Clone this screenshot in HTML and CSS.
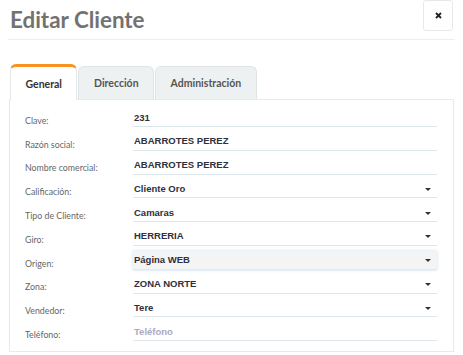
FILE: index.html
```html
<!DOCTYPE html>
<html lang="es">
<head>
  <meta charset="UTF-8" />
  <meta name="viewport" content="width=device-width, initial-scale=1.0"/>
  <title>Editar Cliente</title>
  <link rel="stylesheet" href="styles.css">
</head>
<body>
  <div class="modal">
    <div class="modal-header">
      <h1 class="title">Editar Cliente</h1>
      <button class="close" type="button">
        <svg width="7" height="7" viewBox="0 0 7 7"><path d="M1 1L6 6M6 1L1 6" stroke="#222" stroke-width="1.8"/></svg>
      </button>
    </div>

    <div class="tabs">
      <div class="tab active">General</div>
      <div class="tab">Dirección</div>
      <div class="tab">Administración</div>
    </div>

    <div class="panel">
      <div class="form">
        <label>Clave:</label>
        <div class="field"><span>231</span></div>

        <label>Razón social:</label>
        <div class="field"><span>ABARROTES PEREZ</span></div>

        <label>Nombre comercial:</label>
        <div class="field"><span>ABARROTES PEREZ</span></div>

        <label>Calificación:</label>
        <div class="field"><span>Cliente Oro</span><i class="caret"></i></div>

        <label>Tipo de Cliente:</label>
        <div class="field"><span>Camaras</span><i class="caret"></i></div>

        <label>Giro:</label>
        <div class="field"><span>HERRERIA</span><i class="caret"></i></div>

        <label>Origen:</label>
        <div class="field focus"><span>Página WEB</span><i class="caret"></i></div>

        <label>Zona:</label>
        <div class="field"><span>ZONA NORTE</span><i class="caret"></i></div>

        <label>Vendedor:</label>
        <div class="field"><span>Tere</span><i class="caret"></i></div>

        <label>Teléfono:</label>
        <div class="field"><span class="placeholder">Teléfono</span></div>
      </div>
    </div>
  </div>
</body>
</html>
```

FILE: styles.css
```css
body {
  margin: 0;
  background: #fff;
  font-family: Lato, "Open Sans", sans-serif;
}

.modal {
  padding: 0 8px;
}

.modal-header {
  display: flex;
  justify-content: space-between;
  align-items: flex-start;
  height: 39px;
  border-bottom: 1px solid #eeeeee;
}

.title {
  margin: 7px 0 0 2px;
  font-size: 22.4px;
  line-height: 26px;
  font-weight: 700;
  color: #727272;
}

.close {
  width: 30px;
  height: 31px;
  margin-right: 2px;
  padding: 0;
  display: flex;
  justify-content: center;
  align-items: center;
  background: #fff;
  border: 1px solid #e8e8e8;
  border-radius: 3px;
}

.tabs {
  display: flex;
  align-items: flex-end;
  gap: 1px;
  margin: 24px 0 0 2px;
  position: relative;
  z-index: 1;
}

.tab {
  height: 33px;
  box-sizing: border-box;
  padding: 0 14.5px;
  display: flex;
  align-items: center;
  background: #edf1f2;
  border: 1px solid #dfe5e7;
  border-bottom: none;
  border-radius: 6px 6px 0 0;
  font-size: 10.5px;
  font-weight: 700;
  color: #555;
}

.tab.active {
  height: 36px;
  margin-bottom: -1px;
  background: #fff;
  border-color: #e3e8ea;
  border-top: 3px solid #f7931e;
  color: #333;
}

.panel {
  margin: 0 1px;
  padding: 3px 16px 10px 15px;
  border: 1px solid #e6ebec;
  box-shadow: 0 1px 1px rgba(0, 0, 0, 0.06);
}

.form {
  display: grid;
  grid-template-columns: 108px 1fr;
  grid-auto-rows: 23.8px;
}

.form label {
  align-self: end;
  line-height: 10px;
  padding-bottom: 1px;
  font-size: 8.8px;
  color: #666;
}

.field {
  margin-top: 5px;
  height: 19px;
  box-sizing: border-box;
  padding: 0 6px 0 1px;
  display: flex;
  justify-content: space-between;
  align-items: center;
  border-bottom: 1px solid #dde6ea;
  font-family: "Liberation Sans", Arial, sans-serif;
  font-size: 9.5px;
  font-weight: 700;
  color: #2f2f3d;
}

.field.focus {
  background: #f4f4f4;
  border-bottom-color: #dfe8ef;
  box-shadow: 0 0 3px rgba(102, 175, 233, 0.4);
}

.placeholder {
  color: #aaa9c4;
}

.caret {
  width: 0;
  height: 0;
  margin-top: 2px;
  border-left: 3px solid transparent;
  border-right: 3px solid transparent;
  border-top: 3.5px solid #333;
}
```
